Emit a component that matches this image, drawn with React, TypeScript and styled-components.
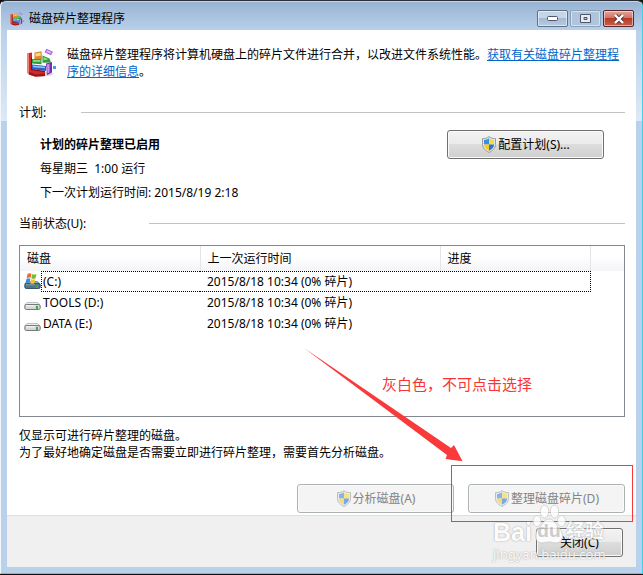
import React from "react";
import styled, { createGlobalStyle, css } from "styled-components";

const GlobalStyle = createGlobalStyle`
  * { box-sizing: border-box; }
  body { margin: 0; background: #111; }
  body, button, table {
    font-family: "Noto Sans", "Noto Sans CJK SC", sans-serif;
    font-size: 12px;
    line-height: 17px;
    color: #000;
  }
  p, h1, h2 { margin: 0; font-size: 12px; font-weight: 400; }
`;

const Window = styled.div`
  position: relative;
  display: flex;
  flex-direction: column;
  min-height: calc(100vh - 1px);
  padding: 0 6px 6px;
  border: 1px solid #3fd0ea;
  border-top: 1px solid #2d3036;
  border-left-color: #f2f7fc;
  border-radius: 6px 6px 0 0;
  background:
    linear-gradient(#97b3d3, #b9d1ea) top / 100% 30px no-repeat,
    linear-gradient(#b9d1ea, #dde9f6) 0 30px / 100% 90px no-repeat,
    #b9d1ea;
  box-shadow: inset 0 1px #c3d4e6;
`;

const TitleBar = styled.header`
  display: flex;
  align-items: center;
  gap: 5px;
  height: 29px;
  padding: 6px 2px 0 3px;
`;

const Title = styled.h1`
  flex: 1;
`;

const Captions = styled.div`
  display: flex;
  gap: 2px;
  align-self: flex-start;
  margin-top: 3px;
`;

const CaptionButton = styled.button<{ $tone?: "close" | "muted" }>`
  display: flex;
  align-items: center;
  justify-content: center;
  width: 31px;
  height: 17px;
  padding: 0;
  border: 1px solid #5d7188;
  border-radius: 2px;
  background: linear-gradient(#c6d6e7 45%, #a3bad4 50%, #b8cce2);
  box-shadow: inset 0 0 0 1px rgba(255, 255, 255, 0.5);
  ${({ $tone }) =>
    $tone === "muted" &&
    css`
      border-color: #8ba1ba;
      background: #afc5de;
    `}
  ${({ $tone }) =>
    $tone === "close" &&
    css`
      border-color: #5a2728;
      background: linear-gradient(#dfa79c, #cf7565 45%, #b83a27 50%, #c8604c);
    `}
`;

const Client = styled.main`
  flex: 1;
  display: flex;
  flex-direction: column;
  background: #fff;
`;

const Content = styled.div`
  flex: 1;
  display: flex;
  flex-direction: column;
  padding: 16px 11px 2px 12px;
`;

const Intro = styled.div`
  display: flex;
  gap: 10px;
  padding-left: 6px;
  min-height: 58px;
`;

const LargeIconBox = styled.span`
  flex: none;
  width: 32px;
  padding: 2px 0 0 1px;
`;

const Link = styled.a`
  color: #0066cc;
`;

const SectionHead = styled.div<{ $gap: number }>`
  display: flex;
  align-items: center;
  gap: ${({ $gap }) => $gap}px;
  height: 17px;
  &::after {
    content: "";
    flex: 1;
    height: 1px;
    background: #c3c3c3;
  }
`;

const Schedule = styled.section`
  display: flex;
  justify-content: space-between;
  align-items: flex-start;
  padding: 9px 21px 14px 21px;
`;

const ScheduleText = styled.div`
  display: flex;
  flex-direction: column;
  gap: 7px;
  padding-top: 6px;
`;

const Strong = styled.p`
  font-weight: 700;
`;

const Spaced = styled.p`
  white-space: pre;
`;

const PushButton = styled.button<{ $narrow?: boolean }>`
  display: flex;
  align-items: center;
  justify-content: center;
  gap: 1px;
  width: ${({ $narrow }) => ($narrow ? 87 : 157)}px;
  height: 29px;
  padding: 0;
  border: 1px solid #707070;
  border-radius: 3px;
  background: linear-gradient(#f2f2f2, #ebebeb 48%, #dddddd 50%, #cfcfcf);
  box-shadow: inset 0 0 0 1px #fafafa;
  &:disabled {
    border-color: #adb2b5;
    background: #f4f4f4;
    color: #838383;
  }
  &:disabled svg {
    opacity: 0.6;
  }
`;

const ListBox = styled.div`
  flex: 1;
  min-height: 120px;
  margin-top: 13px;
  border: 1px solid #828790;
`;

const DiskTable = styled.table`
  width: 100%;
  table-layout: fixed;
  border-collapse: collapse;
  th,
  td {
    padding: 0 0 0 7px;
    text-align: left;
    font-weight: 400;
  }
  thead tr {
    background: linear-gradient(#fff 40%, #f3f4f6);
  }
  th {
    height: 25px;
    border-right: 1px solid #e3e5e9;
  }
  th:last-child {
    border-right: 0;
  }
  td {
    height: 21px;
  }
`;

const Col = styled.col<{ $width?: number }>`
  width: ${({ $width }) => ($width ? `${$width}px` : "auto")};
`;

const DiskRow = styled.tr<{ $focused?: boolean }>`
  td:first-child {
    padding-left: 4px;
  }
  ${({ $focused }) =>
    $focused &&
    css`
      td:not(:last-child) {
        background:
          repeating-linear-gradient(90deg, #000 0 1px, transparent 1px 2px) left top / 100% 1px no-repeat,
          repeating-linear-gradient(90deg, #000 0 1px, transparent 1px 2px) left bottom / 100% 1px no-repeat;
      }
      td:first-child {
        background-position: 21px top, 21px bottom;
      }
      td:nth-child(3) {
        border-right: 1px dotted #000;
      }
    `}
`;

const DiskName = styled.span<{ $focused?: boolean }>`
  display: flex;
  align-items: center;
  height: 21px;
  span {
    height: 21px;
    line-height: 21px;
    padding-left: 1px;
    border-left: 1px ${({ $focused }) => ($focused ? "dotted #000" : "solid transparent")};
  }
`;

const Notes = styled.div`
  margin-top: 10px;
`;

const Actions = styled.div`
  display: flex;
  justify-content: flex-end;
  gap: 14px;
  margin-top: 23px;
`;

const Annotated = styled.div`
  position: relative;
`;

const RedFrame = styled.div`
  position: absolute;
  z-index: 2;
  inset: -19px -8px -9px -17px;
  border: 1px solid #fa3a3a;
  pointer-events: none;
`;

const Arrow = styled.svg`
  position: absolute;
  z-index: 2;
  left: -168px;
  top: -140px;
  pointer-events: none;
`;

const Remark = styled.p`
  position: absolute;
  z-index: 2;
  left: -86px;
  top: -112px;
  font: 15px/24px "Noto Sans CJK SC", sans-serif;
  color: #fa3434;
  white-space: nowrap;
`;

const Footer = styled.footer`
  display: flex;
  justify-content: flex-end;
  padding: 12px 13px 10px;
  border-top: 1px solid #dfdfdf;
  background: #f0f0f0;
`;

const Watermark = styled.div`
  position: absolute;
  z-index: 3;
  right: 33px;
  bottom: 11px;
  width: 116px;
  pointer-events: none;
  opacity: 0.8;
  color: #fff;
  text-shadow: 0 0 1px #999, 0 0 2px #bbb;
`;

const WatermarkTop = styled.div`
  display: flex;
  align-items: flex-end;
  height: 42px;
  font: 700 25px/28px "Liberation Sans", "Noto Sans CJK SC", sans-serif;
`;

const PawSlot = styled.span`
  position: relative;
  width: 34px;
  height: 42px;
  padding-top: 13px;
  color: #c4c4c4;
  font-size: 19px;
  text-align: center;
  text-shadow: none;
  svg {
    position: absolute;
    left: 0;
    top: 0;
  }
  span {
    position: relative;
  }
`;

const WatermarkCjk = styled.span`
  font-size: 19px;
`;

const WatermarkUrl = styled.div`
  font-size: 13px;
  line-height: 16px;
`;

function DefragIcon({ size }: { size: number }) {
  return (
    <svg width={size} height={size} viewBox="0 0 30 30" aria-hidden="true">
      <path d="M3 26l8 3.500 14-2 3-2-9-2z" fill="#b9b9c4" opacity=".6" />
      <path d="M1 5.500L6 4.500V21l13 2v5l-10 .5L3 26.500l-2-2z" fill="#cf2a26" />
      <path d="M1 5.500l2-.5v20l6 3.500L3 26.500l-2-2z" fill="#ee8078" />
      <path d="M3 24l7 2.500 9-1V28l-10 .5-6-2z" fill="#a01418" />
      <path d="M5 10l1-1v12l13 2v1L5 22z" fill="#7d0d12" />
      <path d="M8.500 4.500l7-1.200.5 8H8.500z" fill="#d98a2b" />
      <path d="M9.500 5.500l5-.8.3 3-5.300.8z" fill="#fbd98c" />
      <path d="M6 11h9.500v5.300L6 15.600z" fill="#2f9a3a" />
      <path d="M7 12h7.500v1.800H7z" fill="#8fe07c" />
      <path d="M6 16.500l14 1.500v5L6 21.300z" fill="#2a5fc8" />
      <path d="M7 17.500l12 1.300v1.500L7 19.200z" fill="#8cc2fa" />
      <path d="M16.500 7.500l7 3 1.500 4-8.500.3z" fill="#2f9a3a" />
      <path d="M17.500 9l5 2.200-5 1.300z" fill="#8fe07c" />
      <path d="M20 15.500l6-1.500v10.500l-5 2.500z" fill="#7a2bb0" />
      <path d="M21 16.500l2.500-.7v8.700l-2 1z" fill="#c995ec" />
      <path d="M20.500.7l6.500 3-2 3.500-6.500-3z" fill="#a55fe0" />
      <path d="M21 2l4.500 2-1 1.700-4.500-2z" fill="#dcb6fa" />
      <path d="M27 18h3v3h-3z" fill="#36a6df" />
    </svg>
  );
}

function ShieldIcon() {
  return (
    <svg width="16" height="17" viewBox="0 0 16 17" aria-hidden="true">
      <path d="M8 .6C6 2.200 4 2.600 1.500 2.600v5.900c0 3.700 3 6.300 6.500 7.900 3.500-1.600 6.500-4.200 6.500-7.900V2.600C12 2.600 10 2.200 8 .6z" fill="#e3e6e8" stroke="#959ba1" />
      <path d="M8 2.300v6.200H3V4c2 0 3.500-.5 5-1.700z" fill="#3591e4" />
      <path d="M8 2.300C9.500 3.500 11 4 13 4v4.500H8z" fill="#fbd93a" />
      <path d="M3 8.500h5v6.300c-3-1.500-5-3.300-5-6.300z" fill="#fbca24" />
      <path d="M13 8.500H8v6.300c3-1.500 5-3.300 5-6.300z" fill="#2678d0" />
    </svg>
  );
}

function DriveIcon({ system }: { system?: boolean }) {
  return (
    <svg width="17" height="17" viewBox="0 0 17 17" aria-hidden="true">
      <path
        d="M3 8.500h10.500L16 11H.8z"
        fill={system ? "#7fa6c2" : "#eceeef"}
        stroke={system ? "#55798f" : "#a8a8a8"}
        strokeWidth=".7"
      />
      <rect
        x=".8"
        y="10.500"
        width="15.400"
        height="5"
        rx="1.500"
        fill={system ? "#52748a" : "#d5d6d8"}
        stroke={system ? "#3a5468" : "#77797c"}
      />
      <rect x="2" y="11.300" width="9" height="1" fill="#fff" opacity={system ? 0.3 : 0.9} />
      <rect x="12" y="12" width="2" height="3" fill="#35b13c" />
      {system && (
        <g>
          <path d="M3.500 1q2-1.200 4-.3L6.600 4.800q-2-.9-4 .3z" fill="#ee6a2c" />
          <path d="M8.300 1q2 1 4.200 0l-1 4.200q-2 1-4.200 0z" fill="#78b83a" />
          <path d="M2.400 6q2-1.200 4-.3L5.500 9.800q-2-.9-4 .3z" fill="#3b8fdc" />
          <path d="M7.200 6q2 1 4.200 0l-1 4.200q-2 1-4.200 0z" fill="#f6c22d" />
        </g>
      )}
    </svg>
  );
}

function PawIcon() {
  return (
    <svg width="34" height="42" viewBox="0 0 34 42" fill="#fff" stroke="#c4c4c4" strokeWidth=".8" aria-hidden="true">
      <ellipse cx="5" cy="17" rx="4" ry="5.500" />
      <ellipse cx="12.500" cy="7.500" rx="4.200" ry="6.500" />
      <ellipse cx="22.500" cy="7.500" rx="4.200" ry="6.500" />
      <ellipse cx="29.500" cy="17" rx="4" ry="5.500" />
      <path d="M17 15c5 0 6 5 10 9 6 6 4 15-3 15-3 0-4-1-7-1s-4 1-7 1c-7 0-9-9-3-15 4-4 5-9 10-9z" />
    </svg>
  );
}

const disks = [
  { name: "(C:)", last: "2015/8/18 10:34 (0% 碎片)", system: true },
  { name: "TOOLS (D:)", last: "2015/8/18 10:34 (0% 碎片)" },
  { name: "DATA (E:)", last: "2015/8/18 10:34 (0% 碎片)" },
];

export default function App() {
  return (
    <>
      <GlobalStyle />
      <Window>
        <TitleBar>
          <DefragIcon size={14} />
          <Title>磁盘碎片整理程序</Title>
          <Captions>
            <CaptionButton aria-label="最小化">
              <svg width="11" height="5" aria-hidden="true">
                <rect x=".5" y=".5" width="10" height="4" rx="1" fill="#fff" stroke="#535666" />
              </svg>
            </CaptionButton>
            <CaptionButton $tone="muted" aria-label="最大化" disabled>
              <svg width="11" height="9" aria-hidden="true">
                <path d="M.5.5h10v8H.500zM4 3.500h3v2H4z" fill="#e4ecf5" fillRule="evenodd" stroke="#535666" />
              </svg>
            </CaptionButton>
            <CaptionButton $tone="close" aria-label="关闭窗口">
              <svg width="12" height="10" viewBox="0 0 12 10" aria-hidden="true">
                <path d="M2.500 1.500l7 7m0-7l-7 7" stroke="#4d3640" strokeWidth="4" />
                <path d="M2 1l8 8m0-8l-8 8" stroke="#fff" strokeWidth="2.400" />
              </svg>
            </CaptionButton>
          </Captions>
        </TitleBar>
        <Client>
          <Content>
            <Intro>
              <LargeIconBox>
                <DefragIcon size={30} />
              </LargeIconBox>
              <p>
                磁盘碎片整理程序将计算机硬盘上的碎片文件进行合并，以改进文件系统性能。
                <Link href="#help">获取有关磁盘碎片整理程序的详细信息</Link>。
              </p>
            </Intro>
            <SectionHead $gap={35}>
              <h2>计划:</h2>
            </SectionHead>
            <Schedule>
              <ScheduleText>
                <Strong>计划的碎片整理已启用</Strong>
                <Spaced>每星期三&nbsp; 1:00 运行</Spaced>
                <p>下一次计划运行时间: 2015/8/19 2:18</p>
              </ScheduleText>
              <PushButton>
                <ShieldIcon />
                配置计划(S)...
              </PushButton>
            </Schedule>
            <SectionHead $gap={63}>
              <h2 id="status">当前状态(U):</h2>
            </SectionHead>
            <ListBox>
              <DiskTable aria-labelledby="status">
                <colgroup>
                  <Col $width={180} />
                  <Col $width={240} />
                  <Col $width={150} />
                  <Col />
                </colgroup>
                <thead>
                  <tr>
                    <th>磁盘</th>
                    <th>上一次运行时间</th>
                    <th>进度</th>
                    <th />
                  </tr>
                </thead>
                <tbody>
                  {disks.map((disk) => (
                    <DiskRow key={disk.name} $focused={disk.system}>
                      <td>
                        <DiskName $focused={disk.system}>
                          <DriveIcon system={disk.system} />
                          <span>{disk.name}</span>
                        </DiskName>
                      </td>
                      <td>{disk.last}</td>
                      <td />
                      <td />
                    </DiskRow>
                  ))}
                </tbody>
              </DiskTable>
            </ListBox>
            <Notes>
              <p>仅显示可进行碎片整理的磁盘。</p>
              <p>为了最好地确定磁盘是否需要立即进行碎片整理，需要首先分析磁盘。</p>
            </Notes>
            <Actions>
              <PushButton disabled>
                <ShieldIcon />
                分析磁盘(A)
              </PushButton>
              <Annotated>
                <PushButton disabled>
                  <ShieldIcon />
                  整理磁盘碎片(D)
                </PushButton>
                <RedFrame />
                <Arrow width="164" height="120" viewBox="0 0 164 120" aria-hidden="true">
                  <path d="M4 4L151 104l3-3 8.500 16.200-17-2.200 1.500-4z" fill="#fa3a3a" />
                </Arrow>
                <Remark>灰白色，不可点击选择</Remark>
              </Annotated>
            </Actions>
          </Content>
          <Footer>
            <PushButton $narrow>关闭(C)</PushButton>
          </Footer>
        </Client>
        <Watermark>
          <WatermarkTop>
            Bai
            <PawSlot>
              <PawIcon />
              <span>du</span>
            </PawSlot>
            <WatermarkCjk>经验</WatermarkCjk>
          </WatermarkTop>
          <WatermarkUrl>jingyan.baidu.com</WatermarkUrl>
        </Watermark>
      </Window>
    </>
  );
}
